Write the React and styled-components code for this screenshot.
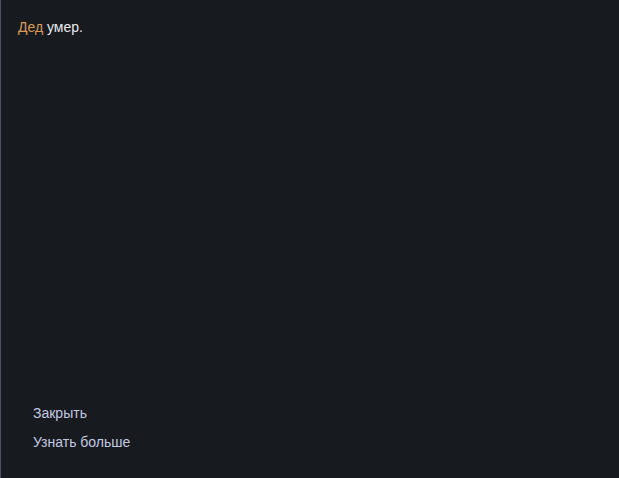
import React from "react";
import styled, { createGlobalStyle } from "styled-components";

const Global = createGlobalStyle`
  html, body { margin: 0; padding: 0; background: #171a1f; }
  body { font-family: "Liberation Sans", Arial, sans-serif; }
`;

const Screen = styled.div`
  box-sizing: border-box;
  height: 478px;
  width: 619px;
  background: #171a1f;
  border-left: 1px solid #4b5365;
  display: flex;
  flex-direction: column;
  justify-content: space-between;
  padding: 17px 0 26px 17px;
`;

const Message = styled.p`
  margin: 0;
  font-size: 14px;
  line-height: 20px;
  color: #e8e9ec;
`;

const Speaker = styled.span`
  color: #d89b5a;
`;

const Options = styled.div`
  display: flex;
  flex-direction: column;
  gap: 9px;
  padding-left: 15px;
`;

const Option = styled.button`
  background: none;
  border: none;
  padding: 0;
  text-align: left;
  font-family: inherit;
  font-size: 14px;
  line-height: 20px;
  color: #c4c9e2;
  cursor: pointer;
`;

export default function App() {
  return (
    <>
      <Global />
      <Screen>
        <Message>
          <Speaker>Дед</Speaker> умер.
        </Message>
        <Options>
          <Option>Закрыть</Option>
          <Option>Узнать больше</Option>
        </Options>
      </Screen>
    </>
  );
}
